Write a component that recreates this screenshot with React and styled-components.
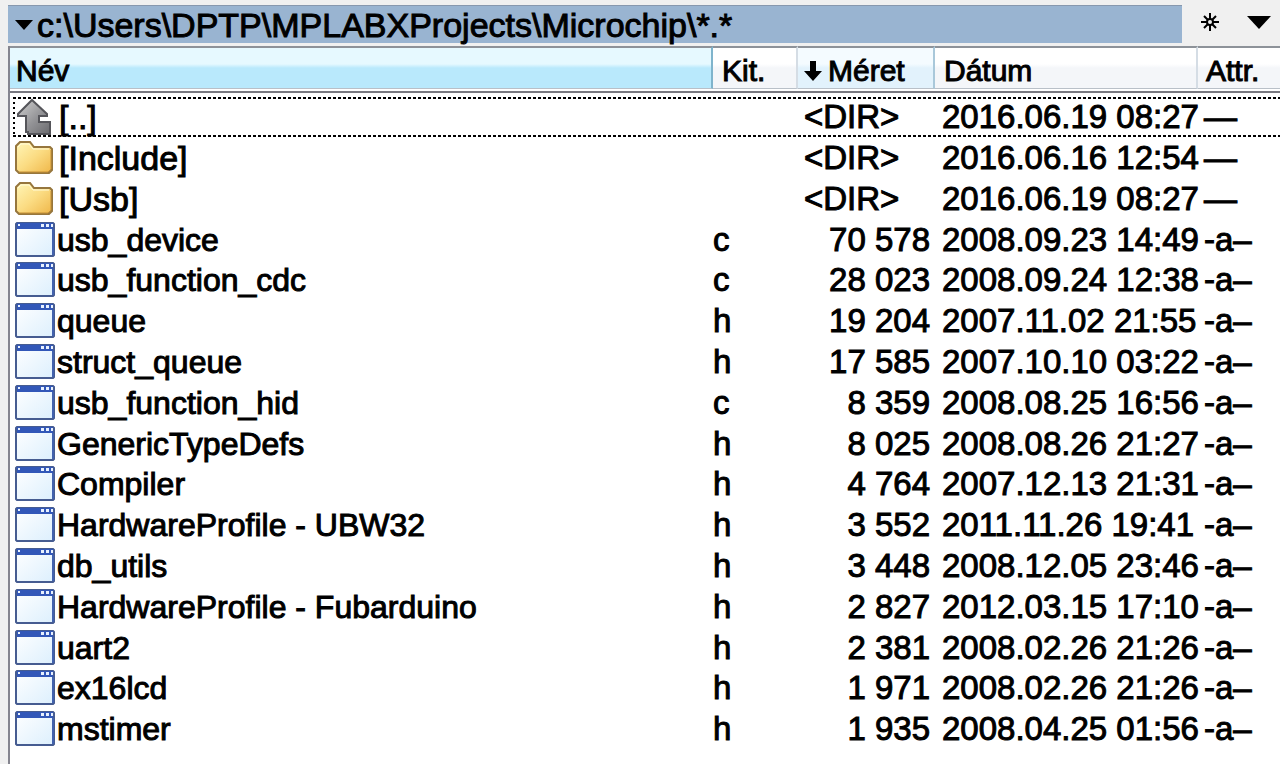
import React from "react";
import styled, { createGlobalStyle, css } from "styled-components";

const GlobalStyle = createGlobalStyle`
  *, *::before, *::after { box-sizing: border-box; }
  body {
    margin: 0;
    background: #f0f0f0;
    color: #000;
    font-family: "Liberation Sans", Arial, sans-serif;
    font-size: 32px;
    -webkit-text-stroke: 1px currentColor;
  }
  button {
    font: inherit;
    color: inherit;
    border: 0;
    padding: 0;
    background: none;
    -webkit-text-stroke: inherit;
  }
`;

const Panel = styled.main`
  display: flex;
  flex-direction: column;
  min-height: 100vh;
  padding: 5px 0 0 8px;
  overflow: hidden;
`;

const PathBar = styled.div`
  display: flex;
  height: 41px;
  padding-bottom: 3px;
`;

const PathButton = styled.button`
  flex: 1;
  min-width: 0;
  display: flex;
  align-items: center;
  gap: 4px;
  padding-left: 7px;
  background: #99b4d1;
  border-top: 1px solid #8798ae;
  font-size: 34px;
  line-height: 36px;
  white-space: nowrap;
`;

const ToolButton = styled.button`
  width: 49px;
  display: flex;
  align-items: center;
  justify-content: center;
  padding: 0 0 4px 6px;
`;

const ListArea = styled.div`
  flex: 1;
  background: #fff;
  border-left: 2px solid #85858f;
`;

const Table = styled.table`
  width: 100%;
  table-layout: fixed;
  border-collapse: separate;
  border-spacing: 0;
`;

const HeaderRow = styled.tr`
  background: linear-gradient(#77777f, #77777f) 0 45px / 100% 2px no-repeat, #fff;
`;

const HeaderCell = styled.th`
  width: ${(p) => p.$width || "auto"};
  height: 50px;
  padding: 0;
  vertical-align: top;
  font-weight: normal;
`;

const tones = {
  active: css`
    background: linear-gradient(#e6f9ff 0 40%, #b9e9fc 50% 100%);
    border-right-color: #7fb4cc;
  `,
  sorted: css`
    background: linear-gradient(#f4fbff 0 40%, #e2f2fc 50% 100%);
    border-right-color: #a9c8da;
  `,
  plain: css`
    background: linear-gradient(#fff 0 40%, #f4f6f9 50% 100%);
    border-right-color: #d5dde5;
  `,
};

const HeaderButton = styled.button`
  width: 100%;
  height: 43px;
  display: flex;
  align-items: center;
  gap: 6px;
  padding: 5px 0 0 ${(p) => p.$inset}px;
  border-top: 2px solid #8d9299;
  border-bottom: 1px solid #b9c0c8;
  border-right: 2px solid;
  font-size: 30px;
  line-height: 34px;
  white-space: nowrap;
  ${(p) => tones[p.$tone]}

  th:last-child > & { border-right: 0; }
`;

const Row = styled.tr`
  ${(p) =>
    p.$focused &&
    css`
      background:
        repeating-linear-gradient(90deg, #000 0 3px, #fff 3px 5px) 3px 1px / 100% 2px no-repeat,
        repeating-linear-gradient(90deg, #000 0 3px, #fff 3px 5px) 3px 39px / 100% 2px no-repeat,
        repeating-linear-gradient(#000 0 2px, #fff 2px 5px) 3px 1px / 2px 38px no-repeat;
    `}
`;

const Cell = styled.td`
  height: 41px;
  padding: 0 0 0 ${(p) => p.$inset || 0}px;
  font-size: 33px;
  line-height: 40px;
  white-space: nowrap;

  tr:nth-child(5n) > & { height: 40px; }
`;

const SizeCell = styled(Cell)`
  padding-right: 5px;
  text-align: ${(p) => (p.$dir ? "left" : "right")};
`;

const NameContent = styled.div`
  display: flex;
  align-items: center;
  gap: ${(p) => (p.$dir ? 4 : 2)}px;
  padding-left: 5px;
  font-size: ${(p) => (p.$dir ? 34 : 32)}px;

  svg { flex: none; }
`;

const UpIcon = () => (
  <svg width="40" height="40" viewBox="0 0 40 40" aria-hidden="true">
    <defs>
      <linearGradient id="up" x2="1" y2="1">
        <stop offset="0" stopColor="#d2d2d2" />
        <stop offset=".55" stopColor="#949497" />
        <stop offset="1" stopColor="#6a6a6e" />
      </linearGradient>
    </defs>
    <path d="M17 3 32 17v2h-8v6h11v12H13v-2h-2V19H3v-2Z" fill="url(#up)" stroke="#55555a" strokeWidth="2" />
  </svg>
);

const FolderIcon = () => (
  <svg width="40" height="40" viewBox="0 0 40 40" aria-hidden="true">
    <defs>
      <linearGradient id="folder" x2="1" y2="1">
        <stop offset="0" stopColor="#fff6b8" />
        <stop offset=".5" stopColor="#fbdc83" />
        <stop offset="1" stopColor="#efb648" />
      </linearGradient>
    </defs>
    <path d="M1 8 5 4h10l4 5h16l2 2v21l-3 3H4l-3-3Z" fill="url(#folder)" stroke="#96763d" strokeWidth="2" />
    <path d="M3 9 6 6h8l4 5h16" fill="none" stroke="#fffbd9" strokeWidth="1" />
    <path d="M4 34h29l3-3V12" fill="none" stroke="#c58f35" strokeWidth="1" />
  </svg>
);

const FileIcon = () => (
  <svg width="40" height="40" viewBox="0 0 40 40" aria-hidden="true">
    <defs>
      <linearGradient id="file" x2="1" y2="1">
        <stop offset="0" stopColor="#fff" />
        <stop offset="1" stopColor="#dceffd" />
      </linearGradient>
    </defs>
    <path d="M2 3h36l1 1v31l-1 1H2l-1-1V4Z" fill="url(#file)" stroke="#465c91" strokeWidth="2" />
    <path d="M2 3h36v6H2Z" fill="#3257b8" />
    <path d="M3 4h2v2H3ZM26 4h3v3h-3ZM31 4h3v3h-3ZM36 4h2v3h-2Z" fill="#e8f1ff" />
    <path d="M38 9v26" stroke="#4262ae" strokeWidth="2" />
  </svg>
);

const icons = { up: UpIcon, folder: FolderIcon, file: FileIcon };

const columns = [
  { label: "Név", tone: "active", inset: 6 },
  { label: "Kit.", tone: "plain", inset: 9, width: "85px" },
  { label: "Méret", tone: "sorted", inset: 6, width: "137px", sorted: true },
  { label: "Dátum", tone: "plain", inset: 9, width: "263px" },
  { label: "Attr.", tone: "plain", inset: 8, width: "82px" },
];

const entries = [
  ["up", "[..]", "", "<DIR>", "2016.06.19 08:27", "—"],
  ["folder", "[Include]", "", "<DIR>", "2016.06.16 12:54", "—"],
  ["folder", "[Usb]", "", "<DIR>", "2016.06.19 08:27", "—"],
  ["file", "usb_device", "c", "70 578", "2008.09.23 14:49", "-a–"],
  ["file", "usb_function_cdc", "c", "28 023", "2008.09.24 12:38", "-a–"],
  ["file", "queue", "h", "19 204", "2007.11.02 21:55", "-a–"],
  ["file", "struct_queue", "h", "17 585", "2007.10.10 03:22", "-a–"],
  ["file", "usb_function_hid", "c", "8 359", "2008.08.25 16:56", "-a–"],
  ["file", "GenericTypeDefs", "h", "8 025", "2008.08.26 21:27", "-a–"],
  ["file", "Compiler", "h", "4 764", "2007.12.13 21:31", "-a–"],
  ["file", "HardwareProfile - UBW32", "h", "3 552", "2011.11.26 19:41", "-a–"],
  ["file", "db_utils", "h", "3 448", "2008.12.05 23:46", "-a–"],
  ["file", "HardwareProfile - Fubarduino", "h", "2 827", "2012.03.15 17:10", "-a–"],
  ["file", "uart2", "h", "2 381", "2008.02.26 21:26", "-a–"],
  ["file", "ex16lcd", "h", "1 971", "2008.02.26 21:26", "-a–"],
  ["file", "mstimer", "h", "1 935", "2008.04.25 01:56", "-a–"],
];

export default function App() {
  return (
    <>
      <GlobalStyle />
      <Panel>
        <PathBar>
          <PathButton type="button">
            <svg width="18" height="10" viewBox="0 0 18 10" aria-hidden="true">
              <path d="M0 0h18L9 10Z" />
            </svg>
            <span>{"c:\\Users\\DPTP\\MPLABXProjects\\Microchip\\*.*"}</span>
          </PathButton>
          <ToolButton type="button" aria-label="Favourites">
            <svg width="18" height="18" viewBox="0 0 18 18" fill="none" stroke="#000" strokeWidth="2" aria-hidden="true">
              <circle cx="9" cy="9" r="3" />
              <path d="M9 0v6M9 12v6M0 9h6M12 9h6M3 3l4 4M11 11l4 4M15 3l-4 4M7 11l-4 4" />
            </svg>
          </ToolButton>
          <ToolButton type="button" aria-label="History">
            <svg width="24" height="13" viewBox="0 0 24 13" aria-hidden="true">
              <path d="M0 0h24L12 13Z" />
            </svg>
          </ToolButton>
        </PathBar>
        <ListArea>
          <Table>
            <thead>
              <HeaderRow>
                {columns.map((c) => (
                  <HeaderCell key={c.label} $width={c.width} aria-sort={c.sorted ? "descending" : undefined}>
                    <HeaderButton type="button" $tone={c.tone} $inset={c.inset}>
                      {c.sorted && (
                        <svg width="18" height="20" viewBox="0 0 18 20" aria-hidden="true">
                          <path d="M6 0h6v10h6L9 20 0 10h6Z" />
                        </svg>
                      )}
                      {c.label}
                    </HeaderButton>
                  </HeaderCell>
                ))}
              </HeaderRow>
            </thead>
            <tbody>
              {entries.map(([kind, name, ext, size, date, attr], i) => {
                const Icon = icons[kind];
                const dir = kind !== "file";
                return (
                  <Row key={name} $focused={i === 0}>
                    <Cell>
                      <NameContent $dir={dir}>
                        <Icon />
                        {name}
                      </NameContent>
                    </Cell>
                    <Cell>{ext}</Cell>
                    <SizeCell $dir={dir} $inset={6}>{size}</SizeCell>
                    <Cell $inset={7}>{date}</Cell>
                    <Cell $inset={6}>{attr}</Cell>
                  </Row>
                );
              })}
            </tbody>
          </Table>
        </ListArea>
      </Panel>
    </>
  );
}
